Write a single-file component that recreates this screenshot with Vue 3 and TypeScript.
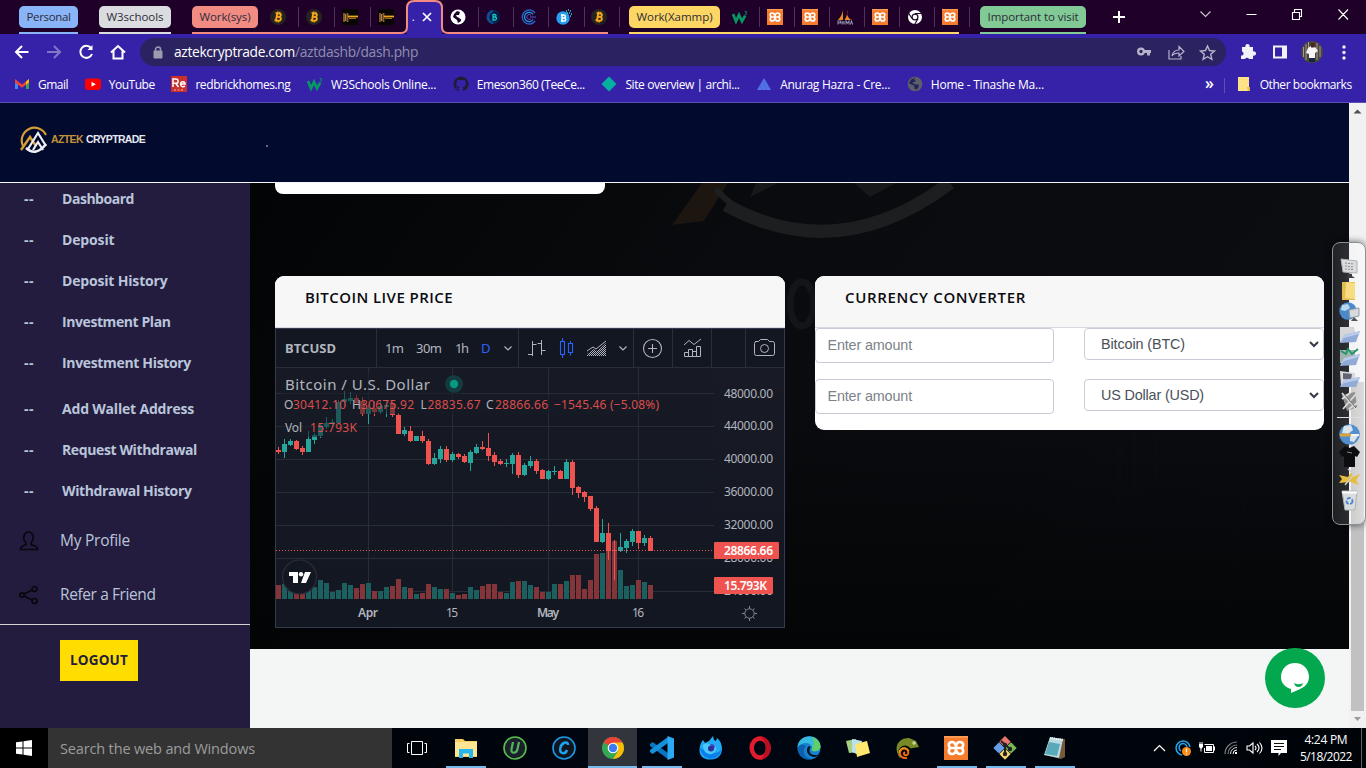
<script setup lang="ts">
import type { Directive } from 'vue'

/* Tracks a label out or in so that it takes exactly the given width. */
const vFit: Directive<HTMLElement, number> = {
  mounted(el, binding) {
    el.style.display = 'inline-block'
    el.style.whiteSpace = 'nowrap'
    const natural = el.getBoundingClientRect().width
    const count = (el.textContent ?? '').trim().length
    el.style.letterSpacing = `${(binding.value - natural) / count}px`
    el.style.width = `${binding.value}px`
  },
}

const workTabs = ['bitcoin', 'bitcoin', 'gold', 'gold']
const moreTabs = ['globe', 'coin', 'ring', 'bluebtc', 'bitcoin']
const xamppTabs = ['w3', 'xampp', 'xampp', 'pma', 'xampp', 'chromew', 'xampp']

const bookmarks = [
  { icon: 'gmail', label: 'Gmail', w: 30 },
  { icon: 'youtube', label: 'YouTube', w: 46 },
  { icon: 'redbrick', label: 'redbrickhomes.ng', w: 95 },
  { icon: 'w3', label: 'W3Schools Online...', w: 105 },
  { icon: 'github', label: 'Emeson360 (TeeCe...', w: 108 },
  { icon: 'diamond', label: 'Site overview | archi...', w: 114 },
  { icon: 'peak', label: 'Anurag Hazra - Cre...', w: 110 },
  { icon: 'globegray', label: 'Home - Tinashe Ma...', w: 113 },
]

const menuTop = [
  { label: 'Dashboard', w: 72 },
  { label: 'Deposit', w: 52.5 },
  { label: 'Deposit History', w: 105.5 },
  { label: 'Investment Plan', w: 108.5 },
  { label: 'Investment History', w: 129 },
]
const menuBottom = [
  { label: 'Add Wallet Address', w: 132 },
  { label: 'Request Withdrawal', w: 135 },
  { label: 'Withdrawal History', w: 129.5 },
]

/* direction, high, low, body top, body bottom, volume height */
type Candle = [string, number, number, number, number, number]
const candles: Candle[] = [
  ['r', 447, 454, 450, 452, 14], ['g', 439, 458, 444, 452, 15], ['g', 439, 446, 441, 445, 8],
  ['r', 440, 450, 441, 449, 8], ['r', 446, 455, 448, 452, 6], ['g', 431, 452, 439, 452, 9],
  ['g', 433, 444, 435, 440, 12], ['g', 423, 438, 425, 436, 19], ['g', 417, 429, 423, 427, 16],
  ['g', 419, 427, 422, 424, 7], ['g', 400, 424, 402, 423, 9], ['g', 391, 406, 399, 402, 16],
  ['g', 392, 404, 398, 401, 14], ['r', 395, 404, 398, 403, 11], ['r', 397, 416, 401, 414, 15],
  ['g', 404, 424, 408, 414, 16], ['r', 401, 416, 408, 412, 8], ['g', 401, 414, 406, 412, 8],
  ['g', 400, 417, 405, 407, 12], ['r', 401, 417, 403, 415, 13], ['r', 413, 434, 415, 434, 20],
  ['g', 427, 436, 430, 434, 12], ['r', 426, 442, 431, 441, 11], ['g', 436, 441, 436, 441, 5],
  ['r', 431, 443, 436, 441, 6], ['r', 439, 465, 441, 464, 15], ['g', 453, 465, 458, 464, 12],
  ['g', 446, 463, 449, 459, 10], ['r', 446, 462, 449, 460, 10], ['g', 452, 462, 454, 460, 6],
  ['r', 453, 459, 454, 457, 4], ['r', 454, 463, 456, 462, 5], ['g', 450, 471, 452, 463, 12],
  ['g', 444, 454, 447, 453, 9], ['r', 441, 450, 447, 449, 13], ['r', 433, 461, 448, 456, 15],
  ['r', 452, 466, 455, 462, 15], ['r', 459, 465, 461, 464, 7], ['g', 459, 467, 463, 464, 6],
  ['g', 453, 474, 455, 464, 17], ['r', 452, 478, 455, 475, 18], ['g', 463, 476, 465, 475, 18],
  ['g', 456, 468, 461, 466, 14], ['r', 459, 474, 461, 471, 12], ['r', 469, 479, 470, 479, 7],
  ['g', 470, 480, 471, 479, 7], ['g', 466, 475, 471, 472, 15], ['r', 470, 479, 471, 479, 15],
  ['g', 459, 479, 462, 479, 18], ['r', 460, 495, 462, 488, 24], ['r', 486, 498, 487, 493, 24],
  ['r', 491, 502, 492, 497, 10], ['r', 496, 511, 496, 509, 19], ['r', 506, 542, 508, 542, 45],
  ['g', 519, 543, 533, 542, 46], ['r', 523, 560, 533, 551, 54], ['r', 540, 580, 550, 551, 58],
  ['g', 533, 552, 547, 551, 29], ['g', 539, 553, 541, 548, 13], ['g', 529, 546, 531, 542, 14],
  ['r', 531, 549, 531, 543, 19], ['g', 535, 546, 538, 543, 17], ['r', 536, 551, 538, 551, 14],
]
const gridY = [393, 426, 459, 492, 525, 558, 591]
const gridX = [368, 452, 548, 638]
const prices = ['48000.00', '44000.00', '40000.00', '36000.00', '32000.00', '28000.00', '24000.00']
const dividers = [376, 518, 633, 672, 711, 745]

const taskApps = [
  { icon: 'taskview', state: '' },
  { icon: 'explorer', state: 'open' },
  { icon: 'iobit', state: '' },
  { icon: 'ccleaner', state: '' },
  { icon: 'chrome', state: 'active' },
  { icon: 'vscode', state: 'open' },
  { icon: 'firefox', state: '' },
  { icon: 'opera', state: '' },
  { icon: 'edge', state: '' },
  { icon: 'notes', state: '' },
  { icon: 'chameleon', state: '' },
  { icon: 'xampp', state: 'open' },
  { icon: 'git', state: 'open' },
  { icon: 'notepad', state: 'open' },
]
const tray = ['t-up', 't-sync', 't-bat', 't-wifi', 't-vol', 't-note']
const dockTop = ['d-pc', 'd-folder', 'd-net', 'd-docs', 'd-music', 'd-pics', 'd-tool']
const dockBottom = ['d-globe', 'd-shirt', 'd-star', 'd-bin']
</script>

<template>
  <div class="screen">
    <svg class="sprites" width="0" height="0">
      <defs>
        <symbol id="bitcoin" viewBox="0 0 16 16"><circle cx="8" cy="8" r="8" fill="#242322" /><g fill="none" stroke="#f7a61c" stroke-width="1.9" transform="rotate(9 8 8)"><path d="M5 4.3h3.8a1.7 1.7 0 0 1 0 3.500H6.200M6.200 7.800h3.100a1.900 1.900 0 0 1 0 3.800H5M6.600 4v8" /><path d="M7 2.500v2M9 2.500v2M7 11.500v2M9 11.500v2" stroke-width="1.100" /></g></symbol>
        <symbol id="gold" viewBox="0 0 16 16"><path d="M0 0h16v16H0z" fill="#090706" /><path d="M2 4v9M5.500 4v9" stroke="#8f5f2c" stroke-width="1.800" /><path d="M3.700 5v7" stroke="#caa06a" stroke-width="1" /><path d="M6 7.500h10" stroke="#f0a91c" stroke-width="1.800" /><path d="M7 9.500h7" stroke="#9a6b1b" stroke-width="1" /></symbol>
        <symbol id="globe" viewBox="0 0 16 16"><circle cx="8" cy="8" r="7.500" fill="#fff" /><path d="M7 2l3 1-1 3H6l1 2 4 1v3l-3 2-1-3-4-3 1-3z" fill="#1e0528" /><path d="M8 7l3 1 2 1-1 2-3-2z" fill="#fff" /></symbol>
        <symbol id="globegray" viewBox="0 0 16 16"><circle cx="8" cy="8" r="7.300" fill="#5b6066" /><path d="M9 1.500l-2 2 2 2-4 1 3 2 4 0-1 4-3 1-1-4-5-2 2-4z" fill="#25215c" /></symbol>
        <symbol id="coin" viewBox="0 0 16 16"><ellipse cx="7.500" cy="8" rx="6.500" ry="7" fill="#0b2458" /><path d="M7 1a6.500 7 0 0 0 0 14" fill="#0f4c92" /><circle cx="8.500" cy="8" r="5" fill="#061b3d" /><path d="M7 5.500h1.700a1.200 1.200 0 0 1 0 2.500H7v-3 6h2a1.300 1.300 0 0 0 0-3" fill="none" stroke="#12c8cc" stroke-width="1.300" /></symbol>
        <symbol id="ring" viewBox="0 0 16 16"><g fill="none" stroke="#295bc9"><path d="M14 4A7 7 0 1 0 14 12" stroke-width="1.500" /><path d="M12 5.500a4.600 4.600 0 1 0 0 5" stroke="#19a3d5" stroke-width="1.300" /><path d="M15 8H9M10 6.200a2.500 2.500 0 1 0 0 3.600" stroke="#5b50dc" /></g></symbol>
        <symbol id="bluebtc" viewBox="0 0 16 16"><circle cx="7" cy="9" r="6.700" fill="#269df0" /><path d="M5 6h2.800a1.400 1.400 0 0 1 0 3H6V5v8M6 9h2.200a1.500 1.500 0 0 1 0 3H5" fill="none" stroke="#fff" stroke-width="1.500" /><path d="M10 2h1M12 1h1M14 2h1M13 4h1M15 5h1M11 4h1M14 7h1" stroke="#38d1cf" stroke-width="1.300" /></symbol>
        <symbol id="w3" viewBox="0 0 16 16"><path d="M1 5l3 7.400L7 6l3 6.400 3.200-5.800" fill="none" stroke="#059862" stroke-width="2.700" /><path d="M12.700 2.600h2l-1 1.500c1.400 0 1.300 2-.9 1.700" fill="none" stroke="#059862" stroke-width=".9" /></symbol>
        <symbol id="xampp" viewBox="0 0 16 16"><path d="M0 0h16v16H0z" fill="#f47c2c" /><path d="M0 0h16v1.200H0z" fill="#ff9d55" /><path d="M5.500 8H7.800M8.200 8h2.300M7.600 6.400Q7.300 4 5.500 4 3.200 4 3.200 6 3.200 7.500 4.600 8 3.200 8.500 3.200 10 3.200 12 5.500 12 7.300 12 7.800 10L8.200 6Q8.700 4 10.500 4 12.800 4 12.800 6 12.800 7.500 11.400 8 12.800 8.500 12.800 10 12.800 12 10.500 12 8.700 12 8.400 9.600" fill="none" stroke="#fff" stroke-width="1.700" /></symbol>
        <symbol id="pma" viewBox="0 0 16 16"><path d="M6 1v10H1C3.500 8 5.500 5 6 1zM10.500 1c-1.500 4 .5 8 4 10H7.500C9.500 8 10.500 5 10.500 1z" fill="#e88a1c" /><path d="M1 15.500v-3.500h2.500v2H1M5 15.500v-3.500M7 12v3.500M5 13.800h2M9 15.500v-3.500l1.500 2 1.500-2v3.500M13.300 15.500l1.200-3.500 1.200 3.500" fill="none" stroke="#8c8ca8" stroke-width="1.100" /></symbol>
        <symbol id="chromew" viewBox="0 0 16 16"><circle cx="8" cy="8" r="7" fill="#fff" /><path d="M8 4.500h6.500M5 9.500L1.700 4.200M11 9.700L7.800 15" stroke="#1e0528" stroke-width="1.200" /><circle cx="8" cy="8" r="3.500" fill="#1e0528" /><circle cx="8" cy="8" r="2.300" fill="#fff" /></symbol>
        <symbol id="gmail" viewBox="0 0 16 16"><path d="M1 4v9h3V6" fill="#4285f4" /><path d="M12 6v7h3V4" fill="#34a853" /><path d="M1 3l7 5.500L15 3v3.500l-7 5.200-7-5.200z" fill="#ea4335" /><path d="M12 5.500L15 3v3.500l-3 2.200z" fill="#fbbc04" /></symbol>
        <symbol id="youtube" viewBox="0 0 16 16"><rect y="2.500" width="16" height="11.500" rx="3" fill="#f00" /><path d="M6.500 5.700v5l4.300-2.500z" fill="#fff" /></symbol>
        <symbol id="redbrick" viewBox="0 0 16 16"><path d="M0 0h16v16H0z" fill="#c9302c" /><path d="M2 11V3h3a2 2 0 0 1 0 4.300H2h2.700L7.500 11M9.800 8H14c0-3-4.400-3.300-4.400 0 0 3 2.800 3.200 4.400 2.200" fill="none" stroke="#fff" stroke-width="1.500" /><path d="M3 14h10" stroke="#f4b6b4" stroke-dasharray="2 1.500" /></symbol>
        <symbol id="github" viewBox="0 0 16 16"><path d="M8 .5a7.500 7.500 0 0 0-2.400 14.600c.4.100.5-.2.500-.4v-1.400c-2.100.500-2.500-.9-2.500-.9-.4-.9-.9-1.100-.9-1.100-.7-.5.100-.5.100-.5.800.1 1.200.8 1.200.8.700 1.200 1.800.8 2.200.6 0-.5.300-.8.500-1-1.700-.2-3.400-.8-3.400-3.700 0-.8.300-1.500.8-2-.1-.2-.4-1 .1-2 0 0 .6-.2 2 .8a7 7 0 0 1 3.800 0c1.400-1 2-.8 2-.8.500 1 .2 1.800.1 2 .5.500.8 1.200.8 2 0 2.900-1.800 3.500-3.500 3.700.3.300.6.700.6 1.400v2.100c0 .2.100.5.500.4A7.500 7.500 0 0 0 8 .5z" fill="#1d1d35" /></symbol>
        <symbol id="diamond" viewBox="0 0 16 16"><path d="M8 .5L15.500 8 8 15.500.5 8z" fill="#06b0a0" /></symbol>
        <symbol id="peak" viewBox="0 0 16 16"><path d="M1 14L8 2l7 12z" fill="#5573e8" /><path d="M6 5l5 9M4 9l2.500 5M9 4l5 9" stroke="#4560d0" stroke-width=".8" /></symbol>
        <symbol id="folder" viewBox="0 0 16 16"><path d="M2 1h11v10h1v4H2z" fill="#ffe287" /><path d="M11 11h3v4h-2z" fill="#e8bd3d" /></symbol>
        <symbol id="taskview" viewBox="0 0 24 24"><path d="M6.500 5.500h11v13h-11zM4.500 7.500h-2v9h2M19.500 7.500h2v9h-2" fill="none" stroke="#fff" stroke-width="1" /></symbol>
        <symbol id="explorer" viewBox="0 0 24 24"><path d="M1 3h8l2 2h12v16H1z" fill="#f6cf62" /><path d="M1 6h22v14H1z" fill="#ffe593" /><path d="M5 13h14v9h-4v-4.500H9V22H5z" fill="#27b5ee" /></symbol>
        <symbol id="iobit" viewBox="0 0 24 24"><circle cx="12" cy="12" r="11" fill="#1b1f2c" stroke="#55c04d" stroke-width="1.600" /><path d="M10 6L8.500 13c-1 5 5 5 6 0L16 6" fill="none" stroke="#51b45a" stroke-width="2.200" /></symbol>
        <symbol id="ccleaner" viewBox="0 0 24 24"><circle cx="12" cy="12" r="11" fill="#11151e" stroke="#199bea" stroke-width="1.600" /><path d="M16 9c0-5-7-2-7.700 3-1 6 5 7 6.700 2" fill="none" stroke="#1ca4f0" stroke-width="2.500" /></symbol>
        <symbol id="chrome" viewBox="0 0 24 24"><circle cx="12" cy="12" r="11" fill="#34a853" /><path d="M12 12L2.500 6.500A11 11 0 0 1 21.500 6.500z" fill="#ea4335" /><path d="M12 6.500h9.500A11 11 0 0 1 12 23l5-8z" fill="#fbbc04" /><circle cx="12" cy="12" r="5.300" fill="#fff" /><circle cx="12" cy="12" r="4.200" fill="#3b7df0" /></symbol>
        <symbol id="vscode" viewBox="0 0 24 24"><path d="M0 8l2.500-2L18 17v6L0 10z" fill="#0876be" /><path d="M0 16l2.500 2L18 7V1L0 14z" fill="#1590db" /><path d="M17.500 0L24 2.500v19L17.500 24z" fill="#2aaaf4" /></symbol>
        <symbol id="firefox" viewBox="0 0 24 24"><path d="M4 4l2 3 4-2 4-5 1 4 2 1 1-3c7 5 8 21-6 21.500C-1 24-2 12 4 4z" fill="#21aaf5" /><path d="M1 12c2 14 19 14 22 1-3 4-8 5-12 4z" fill="#0a7fea" /><circle cx="12" cy="13" r="5" fill="#4347c4" /><path d="M4 9c4-3 8-1 9 2l-4 1c2 5 7 2 7-3 4 6-2 10-6 9s-6-4-6-9z" fill="#47c9fa" /><circle cx="12" cy="12.500" r="3" fill="#2f2f9c" /></symbol>
        <symbol id="opera" viewBox="0 0 24 24"><ellipse cx="12" cy="12" rx="8.300" ry="9.500" fill="none" stroke="#e11c2c" stroke-width="4.500" /><path d="M12 .5c6 0 11 5 11 11.500S18 23.500 12 23.500c3-1 5.500-5 5.500-11.500S15 1.500 12 .5z" fill="#b80f22" /></symbol>
        <symbol id="edge" viewBox="0 0 24 24"><circle cx="12" cy="12" r="11.500" fill="#1584cf" /><path d="M.5 11C2-3.500 23.500-3 23.500 11c-1 5-7 5-9 3 3-5-6-11-14-3z" fill="#34b9e0" /><path d="M15 1c6 2 8.500 6 8.500 10-1 5-7 5-9 3 1-1 4-8 .5-13z" fill="#60cf67" /><path d="M12 10c-4 3-2 9 3 10.500 3 1 5 0 6.500-2-4 1.500-9 0-9-4 0-2 1-2.500 1-4z" fill="#06111f" /><path d="M9 10c-5 6-1 12 5 13C5 25-1 17 2 10q3-3 7 0z" fill="#0c5eb1" /></symbol>
        <symbol id="notes" viewBox="0 0 24 24"><path d="M0 5l10-2 2 13-9 1z" fill="#a4d17f" /><path d="M6 3l10 2-3 14-7-3z" fill="#b9e0ed" /><path d="M9 8l12-3 3 12-13 4z" fill="#ffe66e" /></symbol>
        <symbol id="chameleon" viewBox="0 0 24 24"><path d="M5 22C-2 13 2 2 14 2l7 3 3 6-6 1-6 1z" fill="#788a28" /><circle cx="10" cy="16" r="6.500" fill="#090704" /><path d="M12 22c-5 1-8-3-7-6 2-6 10-3 8 2-2 3-6 0-3-2" fill="none" stroke="#f06c16" stroke-width="1.900" /><path d="M4 17c0-6 8-7 10-2" fill="none" stroke="#ecc52f" /><circle cx="19" cy="7" r="1.700" fill="#cdd8a1" /></symbol>
        <symbol id="git" viewBox="0 0 24 24"><path d="M12 0l5.700 5.700-5.700 5.700-5.700-5.700z" fill="#ed746e" /><path d="M6 6.200l5.700 5.700L6 17.600.3 11.900z" fill="#689de9" /><path d="M18 6.200l5.700 5.700-5.700 5.700-5.700-5.700z" fill="#79ba57" /><path d="M12 12.400l5.700 5.700-5.700 5.700-5.700-5.700z" fill="#f4d36c" /><path d="M8 5l9 8M12 9v9" stroke="#222" stroke-width="2" /><circle cx="12" cy="9" r="2.200" fill="#222" /><circle cx="17" cy="13" r="2.200" fill="#222" /><circle cx="12" cy="18" r="2.200" fill="#222" /></symbol>
        <symbol id="notepad" viewBox="0 0 24 24"><path d="M8 2l14 1v18l-4 2L2 19z" fill="#765937" /><path d="M7 1l13 2-4 19L1 19z" fill="#b9dae1" /><path d="M6 6l11 2-3 12L2 18z" fill="#5aa9b9" /><path d="M7 2l13 2" stroke="#f8f9f8" stroke-width="2" stroke-dasharray="1 1" /></symbol>
        <symbol id="t-up" viewBox="0 0 18 18"><path d="M4 12l5.500-5.500L15 12" fill="none" stroke="#fff" stroke-width="1.200" /></symbol>
        <symbol id="t-sync" viewBox="0 0 18 18"><g fill="none" stroke="#21a8ee" stroke-width="1.500"><path d="M8 16A7 7 0 1 1 16 8" /><path d="M7 12a4 4 0 1 1 6-4" /></g><circle cx="12.500" cy="12.500" r="4.500" fill="#ff8b16" /><path d="M12.500 9.500v3.700M12.500 14.500v1" stroke="#fff" stroke-width="1.200" /></symbol>
        <symbol id="t-bat" viewBox="0 0 18 18"><path d="M6.500 5.500h9v8h-9V9" fill="none" stroke="#fff" /><path d="M16 7.500h1v4h-1zM8 7h6v5H8zM1 5h4v3L3.500 9.500v3h-1v-3L1 8zM1.500 3h1v2h-1zM3.500 3h1v2h-1z" fill="#fff" /></symbol>
        <symbol id="t-wifi" viewBox="0 0 18 18"><g fill="none"><path d="M3 15A12 12 0 0 1 15 3M6 15a9 9 0 0 1 9-9" stroke="#777c82" stroke-width="1.200" /><path d="M8.500 15A6.500 6.500 0 0 1 15 8.500" stroke="#ddd" /><path d="M11 15a4 4 0 0 1 4-4" stroke="#fff" /></g><path d="M13 13h2v2h-2z" fill="#fff" /></symbol>
        <symbol id="t-vol" viewBox="0 0 18 18"><path d="M1 7h2.500L7 4v10l-3.500-3H1zM9 7q2 2 0 4M11 5q4 4 0 8M13.500 3.500q5 5.500 0 11" fill="none" stroke="#fff" stroke-width="1.100" /></symbol>
        <symbol id="t-note" viewBox="0 0 18 18"><path d="M1 1h16v13h-6l-2.500 3v-3H1z" fill="#fff" /><path d="M4 4.500h10M4 7.500h10M4 10.500h7" stroke="#111" /></symbol>
        <symbol id="d-pc" viewBox="0 0 21 21"><path d="M2 1l16 2v12L4 14z" fill="#dbdcdd" stroke="#b0b3b6" /><path d="M6 5l9 1M6 8l8 1M6 11l8 .5" stroke="#8a8a8a" stroke-dasharray="2 1" /><path d="M8 15l5 1v2l3 2H6l3-2z" fill="#3a3c3e" /></symbol>
        <symbol id="d-folder" viewBox="0 0 21 21"><path d="M3 2h13v18H3z" fill="#e3bd50" /><path d="M7 2l9 1v16L6 18z" fill="#f7dc82" /></symbol>
        <symbol id="d-net" viewBox="0 0 21 21"><circle cx="9" cy="9" r="8.700" fill="#4b89cb" /><path d="M3 3l6-1 2 4-5 3-4-1z" fill="#b9d8ee" /><path d="M10 8l10-2v8l-9 2z" fill="#d5dadd" stroke="#929da5" /><path d="M15 15l4 4h-7z" fill="#555" /></symbol>
        <symbol id="d-docs" viewBox="0 0 21 21"><path d="M1 2h14l1 5v8L1 17z" fill="#d4d6da" /><path d="M1 18L5 10l16-4-4 11z" fill="#91aad6" /><path d="M1 18L5 10l16-4-1 3L5 13z" fill="#b9cbe9" /></symbol>
        <symbol id="d-music" viewBox="0 0 21 21"><path d="M1 3h15v13H1z" fill="#a3b1ad" /><path d="M2 4l5 3 2-5 4 5 6-5" fill="none" stroke="#199965" stroke-width="1.800" /><path d="M1 19L5 11l16-4-4 11z" fill="#91aad6" /><path d="M1 19L5 11l16-4-1 3L5 14z" fill="#b9cbe9" /></symbol>
        <symbol id="d-pics" viewBox="0 0 21 21"><path d="M1 2l15 2v11L2 17z" fill="#d7d9df" /><path d="M4 4l9 1-1 6-8-1z" fill="#636471" /><path d="M1 18L5 11l16-3-4 10z" fill="#91aad6" /><path d="M1 18L5 11l16-3-1 3L5 14z" fill="#b9cbe9" /></symbol>
        <symbol id="d-tool" viewBox="0 0 21 21"><path d="M3 4l13-3 2 15-10 4z" fill="#8f908f" /><path d="M3 2l15 17M17 3L4 18M3 8l8-6M10 18l8-6" stroke="#dcdcda" stroke-width="1.800" /><path d="M5 3l12 14" stroke="#666" /></symbol>
        <symbol id="d-globe" viewBox="0 0 21 21"><circle cx="10.500" cy="10.500" r="10.300" fill="#528fcf" /><path d="M5 2l7-1 2 5-5 4-6-1zM11 12h8l-4 6-4-1z" fill="#d9e5eb" /><path d="M1 9.500h11v3H1z" fill="#dba33d" /><path d="M12 10h8v2h-8z" fill="#f0f2f4" /></symbol>
        <symbol id="d-shirt" viewBox="0 0 21 21"><path d="M6 0l4.500 2L15 0l6 6-3 5-2-1v11H5V10l-2 1-3-5z" fill="#0c0d0f" /><path d="M8 6l5 1" stroke="#888" /></symbol>
        <symbol id="d-star" viewBox="0 0 21 21"><path d="M0 7l9 2 3-5 2 5 7-3-4 6 3 5-8-3-12 1 3-4z" fill="#e7bd3e" /><path d="M9 1l6 5-9 11" fill="none" stroke="#c9cccf" stroke-width="1.500" /></symbol>
        <symbol id="d-bin" viewBox="0 0 21 21"><path d="M3 1h15l-2 19H6z" fill="#d9ddde" stroke="#adb3b5" /><path d="M3 2.500h15" stroke="#fff" stroke-width="2" /><circle cx="10.500" cy="11" r="3" fill="none" stroke="#4d84d2" stroke-width="1.800" stroke-dasharray="4 1.500" /></symbol>
      </defs>
    </svg>

    <div class="tabstrip">
      <div class="group blue"><span class="chip"><span v-fit="44">Personal</span></span></div>
      <div class="group gray"><span class="chip"><span v-fit="57">W3schools</span></span></div>
      <div class="group salmon">
        <svg class="outline" width="418" height="34"><path d="M214.500 34V8q0-7 7-7h22q7 0 7 7v26" fill="#3622a8" /><path d="M0 33H209Q215 33 215 27V8Q215 1 222 1H243Q250 1 250 8V27Q250 33 256 33H416" fill="none" stroke="#f38b82" stroke-width="2" /></svg>
        <span class="chip"><span v-fit="51">Work(sys)</span></span>
        <span v-for="(t, i) in workTabs" :key="i" class="cell wide" :class="{ bare: i === 3 }"><svg width="16" height="16"><use :href="'#' + t" /></svg></span>
        <span class="cell current"><span class="dot">.</span><svg width="10" height="10"><path d="M1 1l8 8M9 1L1 9" stroke="#fff" stroke-width="1.700" /></svg></span>
        <span v-for="(t, i) in moreTabs" :key="t + i" class="cell narrow"><svg width="16" height="16"><use :href="'#' + t" /></svg></span>
      </div>
      <div class="group yellow">
        <span class="chip"><span v-fit="76">Work(Xammp)</span></span>
        <span v-for="(t, i) in xamppTabs" :key="i" class="cell narrower"><svg width="16" height="16"><use :href="'#' + t" /></svg></span>
      </div>
      <div class="group green"><span class="chip"><span v-fit="91">Important to visit</span></span></div>
      <svg class="plus" width="14" height="14"><path d="M7 1v12M1 7h12" stroke="#fff" stroke-width="2" /></svg>
      <svg class="winbtns" width="150" height="16" fill="none" stroke="#fff" stroke-width="1.100"><path d="M3.500 5.500l5 5 5-5" stroke="#cfc8d4" /><path d="M49.500 8.500h10M95.500 6.500h7v7h-7zM97.500 6v-2.500h7v7h-2M141.500 3.500l9.500 10M151 3.500l-9.500 10" /></svg>
    </div>

    <div class="toolbar">
      <svg class="nav" width="126" height="28" fill="none" stroke="#fff" stroke-width="2"><path d="M28.500 14H16M22 8l-6 6 6 6" /><path d="M47 14h12.500M54 8l6 6-6 6" stroke="#8277c6" /><path d="M91 10a6 6 0 1 0 1 6" /><path d="M92.500 7v5h-5z" fill="#fff" stroke="none" /><path d="M111 14.500l7-6.500 7 6.500M113.500 12.500V20.500h9v-8" /></svg>
      <div class="omnibox">
        <svg class="lock" width="10" height="13"><path d="M1 5h8v7H1z" fill="#9a9cae" stroke="#9a9cae" /><path d="M2.500 5V3.500a2.500 2.500 0 0 1 5 0V5" fill="none" stroke="#9a9cae" stroke-width="1.500" /></svg>
        <span class="url"><b v-fit="121">aztekcryptrade.com</b><i v-fit="123">/aztdashb/dash.php</i></span>
        <svg class="acts" width="84" height="20" fill="none" stroke="#b7b4c9" stroke-width="1.400"><circle cx="5" cy="9.500" r="2.800" stroke-width="2.300" /><path d="M8 9.500h7M12.500 9.500v4" stroke-width="2.800" /><path d="M33 8v9h12v-3M36 14q1-6 7-6V4.500l5 5-5 4.500v-3q-5 0-7 3z" stroke-width="1.200" /><path d="M71.500 4l2 4.500 5 .5-3.800 3.300 1.200 5-4.400-2.600-4.400 2.600 1.200-5L64.500 9l5-.5z" /></svg>
      </div>
      <svg class="ext" width="130" height="28"><path d="M16 9h3.500a2.200 2.200 0 1 1 4 0H27v4.500a2.200 2.200 0 1 1 0 4V21h-4a2.200 2.200 0 0 0-4 0h-4v-3.500a2 2 0 0 0 1-4z" fill="#f2f1f8" /><path d="M48 8.500h12v11H48z" fill="none" stroke="#f2f1f8" stroke-width="2" /><path d="M56 8h5v12h-5z" fill="#f2f1f8" /><circle cx="86" cy="14" r="11" fill="#4a4540" /><path d="M77.500 9v10M80 6v16M82.500 4v8M91 5v17M94 8v11" stroke="#a89d92" stroke-width="1" /><path d="M82 10l3-2 4 1 3 4-3 2v6h-6v-5l-3-1z" fill="#f5f5f5" /><path d="M85 5h3.500v4.500H85z" fill="#44271d" /><path d="M83 20h6v4h-6z" fill="#17273a" /><g fill="#f2f1f8"><circle cx="118" cy="9" r="1.700" /><circle cx="118" cy="14.500" r="1.700" /><circle cx="118" cy="20" r="1.700" /></g></svg>
    </div>

    <div class="bookmarks">
      <span v-for="b in bookmarks" :key="b.label" class="bm"><svg width="16" height="16"><use :href="'#' + b.icon" /></svg><span v-fit="b.w">{{ b.label }}</span></span>
      <span class="more">»</span>
      <span class="bm other"><svg width="16" height="16"><use href="#folder" /></svg><span v-fit="92">Other bookmarks</span></span>
    </div>

    <div class="page">
      <header class="site-head">
        <svg class="emblem" width="30" height="30"><path d="M3 21A12 12 0 1 1 26 10" fill="none" stroke="#d59d35" stroke-width="2.200" /><path d="M1 25L10 12l6 9" fill="none" stroke="#d59d35" stroke-width="2.500" /><path d="M8 24l10-16 8 13M13 25l5-8 5 8" fill="none" stroke="#eef0f5" stroke-width="2.200" /><path d="M6 23q10 9 20-4" fill="none" stroke="#eef0f5" stroke-width="2.500" /></svg>
        <span class="brand"><b v-fit="32">AZTEK</b><em v-fit="59">CRYPTRADE</em></span>
        <i class="speck"></i>
      </header>

      <div class="body">
        <aside class="side">
          <nav class="menu">
            <a v-for="m in menuTop" :key="m.label"><i>--</i><span v-fit="m.w">{{ m.label }}</span></a>
          </nav>
          <nav class="menu second">
            <a v-for="m in menuBottom" :key="m.label"><i>--</i><span v-fit="m.w">{{ m.label }}</span></a>
          </nav>
          <a class="big"><svg width="20" height="20"><path d="M7 12C5 10 4.500 7 5 5q1-4 4.500-4T14 5c.5 3 0 5-2 7v1.500l5 2q1.500.5 1.500 3h-17q0-2.500 1.500-3l4-2z" fill="none" stroke="#08070e" stroke-width="1.700" /></svg><span v-fit="70">My Profile</span></a>
          <a class="big"><svg width="20" height="20" fill="none" stroke="#08070e" stroke-width="1.700"><path d="M5 9l8-4M5 11l8 4" /><circle cx="3" cy="10" r="2.200" /><circle cx="15.500" cy="4" r="2.500" /><circle cx="15.500" cy="16" r="2.500" /></svg><span v-fit="95.500">Refer a Friend</span></a>
          <hr />
          <button class="logout"><span v-fit="58">LOGOUT</span></button>
        </aside>

        <main class="main">
          <svg class="backdrop" width="1099" height="466">
            <defs><linearGradient id="bg" x1="0" x2="1" y1="0" y2=".3"><stop offset="0" stop-color="#030405" /><stop offset=".45" stop-color="#0a0b0e" /><stop offset="1" stop-color="#0b0d12" /></linearGradient><linearGradient id="low" x1="0" x2="0" y1="0" y2="1"><stop offset=".45" stop-color="#000" stop-opacity="0" /><stop offset="1" stop-color="#020303" stop-opacity=".75" /></linearGradient></defs>
            <path d="M0 0h1099v466H0z" fill="url(#bg)" />
            <path d="M422 42L452 0h26l-24 38z" fill="#1d150f" />
            <path d="M506 0l-6 14 28-14zM604 0l16 14 26-14z" fill="#17181a" />
            <path d="M476 22Q588 84 700 0" fill="none" stroke="#1d1e20" stroke-width="13" />
            <path d="M466 6Q484 28 520 40" fill="none" stroke="#1d1e20" stroke-width="6" />
            <ellipse cx="552" cy="121" rx="12" ry="22" fill="none" stroke="#141518" stroke-width="7" />
            <path d="M1000 290l-30 176M870 260v60M885 240v70M905 240v60" stroke="#101217" stroke-width="5" fill="none" opacity=".4" />
            <path d="M0 0h1099v466H0z" fill="url(#low)" />
          </svg>
          <div class="stub"></div>
          <div class="cards">
            <section class="card">
              <h2><span v-fit="148">BITCOIN LIVE PRICE</span></h2>
              <svg class="chart" width="510" height="300" viewBox="275 328 510 300">
                <defs><linearGradient id="cg" x1="0" x2="0" y1="0" y2="1"><stop offset="0" stop-color="#181b26" /><stop offset="1" stop-color="#131722" /></linearGradient><pattern id="dots" width="2" height="2" patternUnits="userSpaceOnUse"><path d="M0 0h1v1H0zM1 1h1v1H1z" fill="#b2b5be" /></pattern></defs>
                <path d="M275 328h510v300H275z" fill="#131722" />
                <path d="M276 368h508v231H276z" fill="url(#cg)" />
                <g fill="#363a45" opacity=".6"><rect v-for="x in gridX" :key="x" :x="x" y="368" width="1" height="231" /><rect v-for="y in gridY" :key="y" x="276" :y="y" width="438" height="1" /></g>
                <g v-for="(c, i) in candles" :key="i">
                  <rect :x="276 + 6 * i" :y="599 - c[5]" width="5" :height="c[5]" :fill="c[0] === 'r' ? '#843539' : '#1b605f'" />
                </g>
                <g v-for="(c, i) in candles" :key="'c' + i" :fill="c[0] === 'r' ? '#ef5350' : '#26a69a'">
                  <rect :x="278 + 6 * i" :y="c[1]" width="1" :height="c[2] - c[1]" /><rect :x="276 + 6 * i" :y="c[3]" width="5" :height="c[4] - c[3]" />
                </g>
                <path d="M276 550.500h438" stroke="#ef5350" stroke-dasharray="1 2" />
                <path d="M283 374h178v22h199v18H359v23h-76z" fill="#181b26" opacity=".55" />
                <path d="M275 367h510v1H275z" fill="#2a2e39" />
                <rect v-for="x in dividers" :key="x" :x="x" y="329" width="1" height="38" fill="#2a2e39" />

                <g class="ct">
                  <text x="285" y="353" font-size="13" font-weight="700" textLength="51">BTCUSD</text>
                  <text x="385" y="353" font-size="13" textLength="19">1m</text>
                  <text x="416" y="353" font-size="13" textLength="26">30m</text>
                  <text x="455" y="353" font-size="13" textLength="14">1h</text>
                  <text x="481" y="353" font-size="13" class="on">D</text>
                  <text x="285" y="390" font-size="15" textLength="145">Bitcoin / U.S. Dollar</text>
                  <g font-size="12">
                    <text x="284" y="409">O</text><text x="293" y="409" class="red" textLength="53">30412.10</text>
                    <text x="352" y="409">H</text><text x="361" y="409" class="red" textLength="53">30675.92</text>
                    <text x="420.500" y="409">L</text><text x="427.500" y="409" class="red" textLength="53">28835.67</text>
                    <text x="486" y="409">C</text><text x="495" y="409" class="red" textLength="53">28866.66</text>
                    <text x="554" y="409" class="red" textLength="105">−1545.46 (−5.08%)</text>
                    <text x="285" y="432" textLength="17">Vol</text><text x="310" y="432" class="red" textLength="47">15.793K</text>
                    <g class="axis"><text v-for="(p, i) in prices" :key="p" x="724" :y="398 + 33 * i - (i > 0 ? 1 : 0)" textLength="49">{{ p }}</text>
                    <text x="358" y="617" textLength="20" font-weight="600">Apr</text><text x="446" y="617" textLength="12">15</text><text x="537" y="617" textLength="22" font-weight="600">May</text><text x="632" y="617" textLength="12">16</text></g>
                  </g>
                </g>
                <rect x="714" y="542" width="65" height="17" rx="1" fill="#ef5350" /><rect x="714" y="577" width="59" height="17" rx="1" fill="#ef5350" />
                <g class="ct label" font-size="12"><text x="724" y="555" textLength="49">28866.66</text><text x="724" y="590" textLength="43">15.793K</text></g>
                <circle cx="454" cy="384" r="9" fill="#143b3e" /><circle cx="454" cy="384" r="4.200" fill="#089981" />
                <g fill="none" stroke="#b2b5be">
                  <path d="M504.500 346.500l3.500 3.500 3.500-3.500M619.500 346.500l3.500 3.500 3.500-3.500" stroke-width="1.200" />
                  <path d="M532.500 341v15M532.500 344.500h4M528 354.500h4.500M541.500 340v15M537.500 343.500h4M541.500 350.500h4" />
                  <path d="M560.500 341.500h4v13h-4zM562.500 338v3.500M562.500 354.500v3.500M568.500 343.500h4v9h-4zM570.500 341v2.500M570.500 352.500v3" stroke="#2962ff" stroke-width="1.100" />
                  <path d="M587 351l6-4 3 2 10-8" />
                  <circle cx="652.500" cy="348.500" r="9" stroke-width="1.100" /><path d="M652.500 344v9M648 348.500h9" stroke-width="1.100" />
                  <path d="M684 345l5-4.500 5 4 7-5.500M684.500 356.500v-4h4v4zM688.500 356.500v-7h4v7zM692.500 356.500v-5h4v5zM696.500 356.500v-10h4v10z" />
                  <path d="M755.500 341.500h3l2-2h7l2 2h3q2 0 2 2v10q0 2-2 2h-16q-2 0-2-2v-10q0-2 2-2z" /><circle cx="764.500" cy="348.500" r="4" />
                  <g stroke="#868993"><circle cx="749.500" cy="613.500" r="4.700" /><path d="M749.500 606v2.500M749.500 618.500v2.500M742 613.500h2.500M754.500 613.500h2.500M744.500 608.500l1.500 1.500M753 617l1.500 1.500M754.500 608.500l-1.500 1.500M746 617l-1.500 1.500" /></g>
                </g>
                <path d="M587 354l7-5 3 2 9-8v13h-19z" fill="url(#dots)" />
                <circle cx="299.500" cy="577" r="17" fill="#131722" stroke="#2a2e39" stroke-width="1.200" />
                <path d="M289 572h9v11h-5v-7h-4zM305 572h6l-5 11h-5z" fill="#fff" /><circle cx="301" cy="574.200" r="2.200" fill="#fff" />
                <path d="M275.500 328.500h509v299h-509z" fill="none" stroke="#363a4e" />
              </svg>
            </section>

            <section class="card">
              <h2><span v-fit="181">CURRENCY CONVERTER</span></h2>
              <div class="conv">
                <div class="field"><span v-fit="84.500">Enter amount</span></div>
                <div class="pick"><span v-fit="84">Bitcoin (BTC)</span><svg width="10" height="7"><path d="M1 1l4 4 4-4" fill="none" stroke="#343a45" stroke-width="2" /></svg></div>
                <div class="field"><span v-fit="84.500">Enter amount</span></div>
                <div class="pick"><span v-fit="103">US Dollar (USD)</span><svg width="10" height="7"><path d="M1 1l4 4 4-4" fill="none" stroke="#343a45" stroke-width="2" /></svg></div>
              </div>
            </section>
          </div>
        </main>

        <div class="scroll"><div class="thumb"></div></div>
        <svg class="arrows" width="17" height="625"><path d="M4.500 10.500l4-4 4 4z" fill="#505050" /><path d="M5 614h7l-3.500 4z" fill="#9a9a9a" /></svg>
      </div>
    </div>

    <div class="taskbar">
      <div class="start"><svg width="16" height="16" fill="#fff"><path d="M0 2.300l6.500-.9v6.100H0zM7.500 1.200L16 0v7.500H7.500zM0 8.500h6.500v6.100L0 13.700zM7.500 8.500H16V16l-8.500-1.200z" /></svg></div>
      <div class="search"><span v-fit="195">Search the web and Windows</span></div>
      <div v-for="a in taskApps" :key="a.icon" class="app" :class="a.state"><svg width="24" height="24"><use :href="'#' + a.icon" /></svg></div>
      <div class="tray"><svg v-for="t in tray" :key="t" width="18" height="18"><use :href="'#' + t" /></svg></div>
      <div class="clock"><span v-fit="43">4:24 PM</span><span v-fit="52">5/18/2022</span></div>
      <i class="peek"></i>
    </div>

    <div class="chat"><svg width="60" height="60"><circle cx="30" cy="30" r="30" fill="#03a84e" /><path d="M30 15c8 0 14 6 14 14 0 9-8 12-18 16v-4c-6-2-10-6-10-12 0-8 6-14 14-14z" fill="#fff" /><path d="M29 35q5 2.500 9 0-1 4-4.500 4T29 35z" fill="#03a84e" /></svg></div>

    <div class="dock">
      <svg v-for="d in dockTop" :key="d" width="21" height="21"><use :href="'#' + d" /></svg>
      <hr />
      <svg v-for="d in dockBottom" :key="d" width="21" height="21"><use :href="'#' + d" /></svg>
    </div>
  </div>
</template>

<style>
body { margin: 0; overflow: hidden; }
</style>

<style scoped>
* { box-sizing: border-box; }
svg { display: block; flex: none; }
.screen { position: relative; width: 1366px; height: 768px; overflow: hidden; background: #000; font-family: "Open Sans", "Noto Sans", sans-serif; font-size: 12px; display: flex; flex-direction: column; }
.sprites { position: absolute; }

.tabstrip { height: 34px; flex: none; background: #1e0029; display: flex; gap: 21px; padding-left: 19px; color: #2b2b38; font-size: 11.5px; }
.group { position: relative; height: 34px; display: flex; align-items: center; border-bottom: 2px solid; flex: none; }
.chip { height: 22px; margin-top: 2px; border-radius: 5px; display: flex; align-items: center; justify-content: center; flex: none; position: relative; }
.chip > span { color: #2d2d3a; margin-top: -1px; }
.blue { width: 59px; border-color: #8ab4f8; }
.blue .chip { width: 59px; background: #8ab4f8; }
.gray { width: 72px; border-color: #dadce0; }
.gray .chip { width: 72px; background: #dadce0; }
.salmon { width: 416px; border-color: transparent; }
.salmon .chip { width: 66px; background: #f28b82; margin-right: 2px; }
.yellow { width: 330px; border-color: #fdd663; }
.yellow .chip { width: 91px; background: #fdd663; margin-right: 2.4px; }
.green { width: 106px; border-color: #81c995; }
.green .chip { width: 106px; background: #81c995; }
.outline { position: absolute; left: 0; top: 0; }
.cell { position: relative; display: flex; align-items: center; justify-content: center; flex: none; height: 20px; margin-top: 2px; }
.cell::after { content: ""; position: absolute; right: -3px; top: 0; width: 1px; height: 20px; background: #4c3558; }
.wide { width: 36px; }
.bare::after, .current::after { display: none; }
.current { width: 36.9px; justify-content: flex-end; gap: 7px; padding-right: 9px; }
.dot { color: #fff; line-height: 16px; }
.narrow { width: 35.2px; }
.narrower { width: 35px; }
.plus { margin: 10px 0 0 5px; }
.winbtns { margin: 6px 0 0 50px; overflow: visible; }

.toolbar { height: 34px; flex: none; background: #3622a8; display: flex; padding-top: 4px; }
.nav { margin-right: 14px; }
.omnibox { width: 1086px; height: 28px; border-radius: 14px; background: #2b2261; display: flex; align-items: center; padding-left: 13px; flex: none; }
.url { margin: -1px 0 0 11px; width: 962px; font-size: 13.8px; display: flex; }
.url b { font-weight: 400; color: #fff; }
.url i { font-style: normal; color: #918eb0; }

.bookmarks { height: 35px; flex: none; background: #3622a8; border-bottom: 1px solid #5d4fb8; display: flex; align-items: center; gap: 16.7px; padding-left: 14px; color: #fff; }
.bm { display: flex; align-items: center; gap: 8px; flex: none; }
.bm > * { margin-top: -2px; }
.more { margin-left: 144.500px; width: 12px; font-size: 16px; font-weight: 600; line-height: 16px; margin-top: -5px; }
.other { border-left: 1px solid #5b52a9; padding-left: 11px; margin-left: -10px; }

.page { height: 625px; flex: none; display: flex; flex-direction: column; }
.site-head { height: 80px; flex: none; background: #020b2d; border-bottom: 1px solid #f7f7fa; width: 1349px; display: flex; align-items: center; padding: 0 0 7px 20px; }
.emblem { margin-top: 1px; }
.brand { display: flex; gap: 3px; margin-left: 1px; font: 700 10.5px "Liberation Sans", sans-serif; }
.brand b { color: #c39139; }
.brand em { color: #e5e8ef; font-style: normal; }
.speck { width: 2px; height: 2px; background: #5e6a7f; margin: 13px 0 0 120.500px; }

.body { position: relative; display: flex; height: 545px; }
.side { width: 250px; flex: none; background: #231c3e; color: #b9c5da; overflow: hidden; }
.menu { margin-top: -5px; }
.menu a, .big { display: flex; align-items: center; height: 41px; font-size: 14px; font-weight: 700; padding-left: 24px; }
.menu i { font-style: normal; width: 38px; letter-spacing: 0.5px; }
.menu.second { margin-top: 5px; }
.big { height: 54px; font-size: 15.5px; font-weight: 400; padding-left: 18.500px; }
.big svg { margin-right: 21.500px; }
.big span { margin-top: -2px; }
.menu.second + .big { margin-top: 3px; }
.side hr { height: 1px; background: #d5d5d5; border: 0; margin: 2px 0 15px; }
.logout { display: block; margin-left: 60px; width: 78px; height: 41px; border: 0; padding: 0 0 2px; background: #fd0; color: #231c3e; font: 700 13.5px "Open Sans", sans-serif; text-align: center; }

.main { position: relative; width: 1099px; flex: none; background: #f4f6f5; }
.backdrop { position: absolute; left: 0; top: 0; }
.stub { position: relative; margin-left: 25px; width: 330px; height: 11px; background: #fff; border-radius: 0 0 8px 8px; }
.cards { position: relative; display: flex; align-items: flex-start; gap: 30px; margin: 82px 0 0 25px; }
.card { width: 510px; border-radius: 9px 9px 0 0; overflow: hidden; background: #fff; }
.card + .card { width: 509px; border-radius: 9px; height: 154px; }
.card h2 { margin: 0; height: 52px; background: #f7f7f7; border-bottom: 1px solid #d8dae2; padding: 10px 0 0 30px; font-size: 15px; line-height: 22px; font-weight: 600; color: #0b0b10; }
.chart text { font-family: "Noto Sans", "Open Sans", sans-serif; }
.ct text { fill: #b2b5be; }
.ct .red { fill: #ef5350; opacity: 0.9; }
.ct .on { fill: #2962ff; }
.ct .axis text { fill: #b2b5be; }
.label text { fill: #fff; font-weight: 600; }

.conv { display: grid; grid-template-columns: 239px 240px; column-gap: 30px; grid-auto-rows: 35px; row-gap: 16px; font: 14.4px "Liberation Sans", sans-serif; align-items: start; }
.field, .pick { border: 1px solid #c9ccd6; border-radius: 4px; display: flex; align-items: center; background: #fff; }
.field { height: 35px; padding: 0 0 2px 11.500px; color: #7c828a; }
.pick { height: 32px; padding-left: 16px; color: #495057; justify-content: space-between; padding-right: 4px; }

.scroll { width: 17px; background: #f1f1f1; margin-top: -80px; height: 625px; padding: 279px 2px 0; }
.thumb { height: 329px; background: #c1c1c1; }
.arrows { position: absolute; right: 0; top: -80px; }

.taskbar { height: 40px; flex: none; background: linear-gradient(90deg, #000, #000712 50%, #000409); display: flex; }
.start { width: 48px; display: flex; align-items: center; justify-content: center; flex: none; }
.search { width: 344px; background: #333; color: #9c9c9c; font-size: 14.500px; display: flex; align-items: center; padding-left: 12px; flex: none; }
.app { width: 49.080px; flex: none; display: flex; align-items: center; justify-content: center; position: relative; }
.open::after, .active::after { content: ""; position: absolute; bottom: 0; left: 5px; right: 4px; height: 2px; background: #76b9ed; }
.active { background: #32363c; }
.active::after { left: 0; right: 0; }
.tray { display: flex; align-items: center; gap: 6px; margin-left: 70.800px; }
.clock { width: 60px; margin-left: 8px; color: #fff; display: flex; flex-direction: column; align-items: center; justify-content: center; line-height: 17px; padding-bottom: 1px; }
.peek { width: 1px; background: #596068; margin-left: 5px; }

.chat { position: absolute; left: 1265px; top: 648px; }
.dock { position: absolute; left: 1332px; top: 242px; width: 34px; height: 283px; border: 1px solid #8b9092; border-radius: 8px; background: linear-gradient(90deg, rgba(255, 255, 255, 0.09) 0%, rgba(255, 255, 255, 0.14) 48%, rgba(255, 255, 255, 0.45) 100%); box-shadow: 0 0 7px rgba(0, 0, 0, 0.6); display: flex; flex-direction: column; padding: 15px 0 0 6px; gap: 1.200px; }
.dock hr { width: 27px; height: 1px; border: 0; background: #ddd; margin: 4px 0 4px -2px; flex: none; }
</style>
